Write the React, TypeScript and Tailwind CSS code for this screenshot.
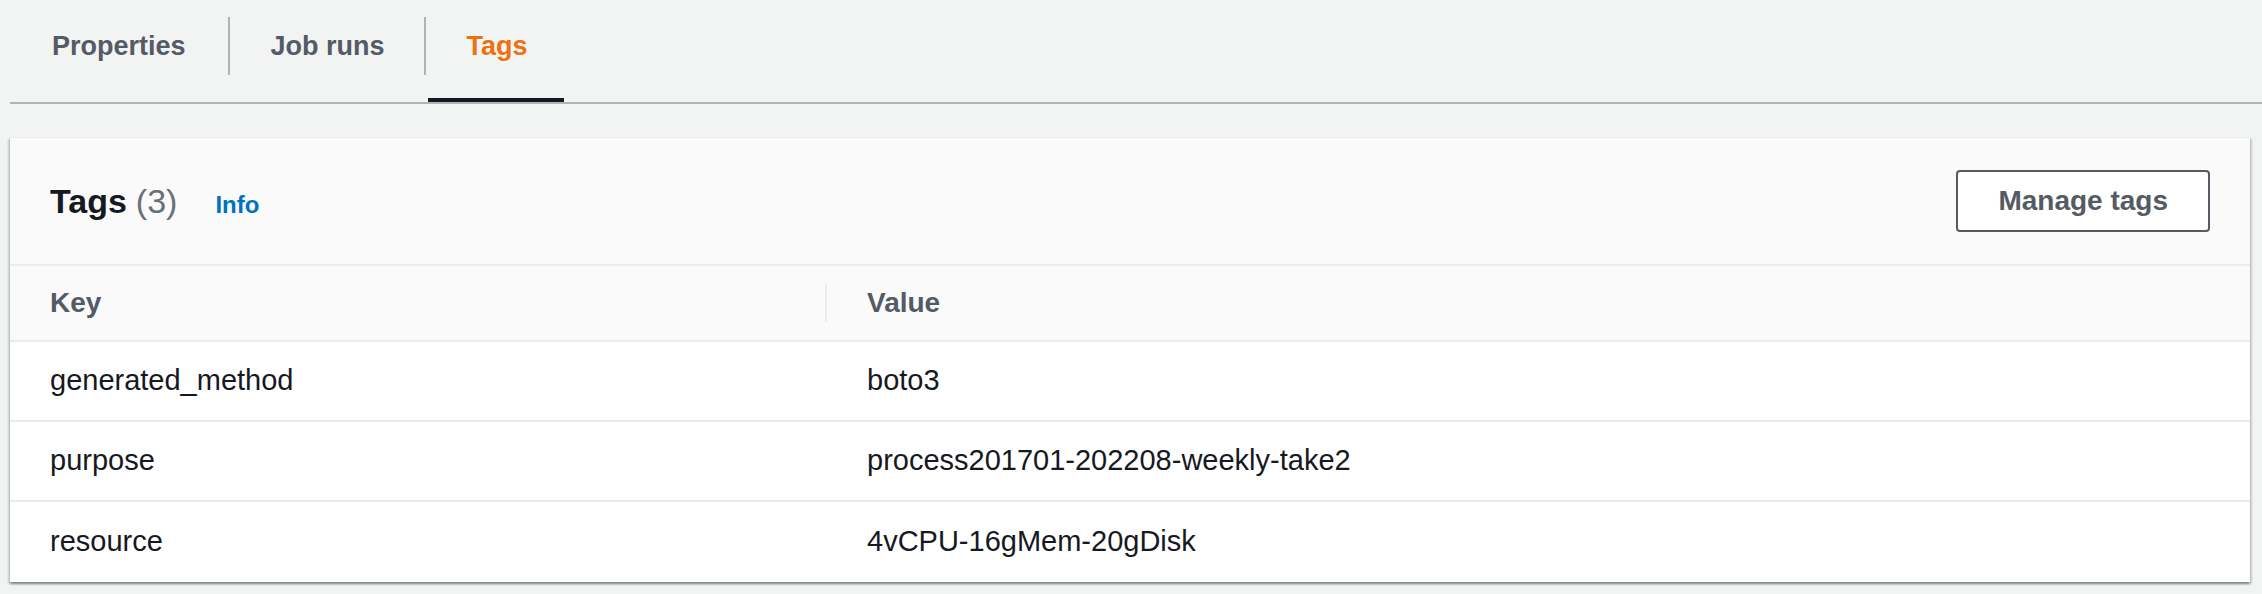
const tabs = [
  { label: "Properties", active: false, pad: "pl-[42px] pr-[42px] border-r-2 border-[#aab7b8]" },
  { label: "Job runs", active: false, pad: "pl-[41px] pr-[39px] border-r-2 border-[#aab7b8]" },
  { label: "Tags", active: true, pad: "pl-[41px] pr-[36px]" },
];

const rows = [
  { key: "generated_method", value: "boto3" },
  { key: "purpose", value: "process201701-202208-weekly-take2" },
  { key: "resource", value: "4vCPU-16gMem-20gDisk" },
];

export default function App() {
  return (
    <div className="min-h-screen bg-[#f2f3f3] font-['Liberation_Sans',Arial,sans-serif] pb-8">
      {/* Tabs */}
      <div className="pl-[10px]">
        <div className="flex border-b-2 border-[#aab7b8]">
          {tabs.map((t) => (
            <div key={t.label} className="relative pt-[17px] pb-[27px]">
              <div
                className={
                  "h-[58px] flex items-center text-[27px] font-bold " +
                  t.pad +
                  (t.active ? " text-[#ec7211]" : " text-[#545b64]")
                }
              >
                {t.label}
              </div>
              {t.active && <div className="absolute left-[2px] right-0 bottom-0 h-[4px] bg-[#16191f]" />}
            </div>
          ))}
        </div>
      </div>

      {/* Tags container */}
      <div className="ml-[10px] mr-[12px] mt-[33px] bg-white shadow-[0_2px_2px_0_rgba(0,28,36,0.3),2px_2px_2px_0_rgba(0,28,36,0.15),-2px_2px_2px_0_rgba(0,28,36,0.15)] border-t border-[#eaeded]">
        <div className="h-[128px] flex items-center justify-between px-[40px] bg-[#fafafa] border-b-2 border-[#eaeded]">
          <div className="flex items-baseline">
            <h2 className="text-[34px] font-bold text-[#16191f]">Tags</h2>
            <span className="text-[34px] text-[#687078] ml-[9px]">(3)</span>
            <a className="ml-[38px] text-[24px] font-bold text-[#0073bb]">Info</a>
          </div>
          <button className="h-[62px] px-[40px] rounded-[4px] border-2 border-[#545b64] bg-white text-[28px] font-bold text-[#545b64]">
            Manage tags
          </button>
        </div>

        <div className="grid grid-cols-[815px_1fr] h-[76px] bg-[#fafafa] border-b-2 border-[#eaeded] text-[28px] font-bold text-[#545b64]">
          <div className="flex items-center px-[40px]">Key</div>
          <div className="flex items-center">
            <div className="h-[38px] border-l-2 border-[#eaeded]" />
            <span className="pl-[40px]">Value</span>
          </div>
        </div>

        {rows.map((r, i) => (
          <div
            key={r.key}
            className={
              "grid grid-cols-[815px_1fr] h-[80px] text-[29px] text-[#16191f] " +
              (i < rows.length - 1 ? "border-b-2 border-[#eaeded]" : "")
            }
          >
            <div className="flex items-center px-[40px]">{r.key}</div>
            <div className="flex items-center pl-[42px]">{r.value}</div>
          </div>
        ))}
      </div>
    </div>
  );
}
